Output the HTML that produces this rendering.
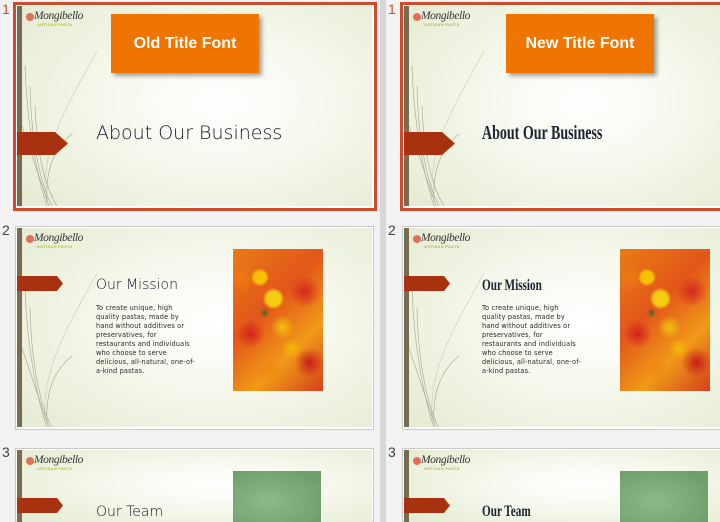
<!DOCTYPE html>
<html style="width:720px;height:522px;overflow:hidden"><head><meta charset="utf-8"><style>
*{margin:0;padding:0;box-sizing:border-box}
body{width:720px;height:522px;overflow:hidden;background:#f2f2f2;position:relative;font-family:"Liberation Sans",sans-serif}
.num{position:absolute;font-size:14px;color:#444}
.num.r{color:#d24a2c}
.sel{position:absolute;border:3px solid #d24a2c;background:#fff}
.gb{position:absolute;border:1px solid #c9c9c9;background:#fff}
.s{position:absolute;width:355px;height:200px;overflow:hidden;background:radial-gradient(ellipse 70% 75% at 57% 48%,#ffffff 0%,#f7f9ef 40%,#e6ecd3 100%)}
.bar{position:absolute;left:0;top:0;width:5px;height:100%;background:#776c52}
.logo{position:absolute;left:9px;top:6px;width:60px;height:20px}
.dot{position:absolute;left:0;top:1px;width:8px;height:8px;border-radius:50%;background:#e0705a}
.mg{position:absolute;left:8px;top:-2px;font-family:"Liberation Serif",serif;font-style:italic;font-size:11.5px;color:#333;letter-spacing:-.4px}
.ap{position:absolute;left:11px;top:10px;font-size:4px;color:#b5c23a;letter-spacing:.3px;font-weight:bold}
.arrow{position:absolute;left:0;width:52px}
.t1{position:absolute;font-family:"DejaVu Sans",sans-serif;font-weight:200;color:#111825;white-space:nowrap}
.t2{position:absolute;font-family:"Liberation Serif",serif;font-weight:bold;color:#1b2230;transform-origin:0 0;transform:scaleX(.7);white-space:nowrap}
.body{position:absolute;font-family:"DejaVu Sans",sans-serif;font-size:6.6px;line-height:9px;color:#2a2a2a;width:100px;letter-spacing:.15px}
.pasta{position:absolute;background:
radial-gradient(circle at 30% 20%,#f6c000 0,#f6c000 6px,transparent 9px),
radial-gradient(circle at 45% 35%,#f4cc10 0,#f4cc10 7px,transparent 11px),
radial-gradient(circle at 55% 55%,#f0c010 0,transparent 12px),
radial-gradient(circle at 65% 70%,#f2b800 0,transparent 10px),
radial-gradient(circle at 20% 60%,#d3221c 0,transparent 14px),
radial-gradient(circle at 80% 30%,#d42820 0,transparent 16px),
radial-gradient(circle at 85% 80%,#c81e1a 0,transparent 15px),
radial-gradient(circle at 10% 20%,#ee7a10 0,transparent 14px),
radial-gradient(circle at 40% 85%,#ef8a10 0,transparent 14px),
radial-gradient(circle at 35% 45%,#4c6a2a 0,transparent 5px),
linear-gradient(135deg,#e97b16,#e2561a 40%,#f09a18 70%,#d3401c)}
.green{position:absolute;background:radial-gradient(ellipse at 40% 60%,#8cba8c,#6fa06c 80%)}
.orange{position:absolute;background:#f07400;color:#fff;font-weight:bold;font-size:16px;text-align:center;line-height:59px;box-shadow:3px 3px 4px rgba(0,0,0,.35)}
.div{position:absolute;left:380px;top:0;width:6px;height:522px;background:#d7d7d7}
</style></head><body>
<div class="div"></div>

<div class="num r" style="left:2px;top:1px">1</div>
<div class="num" style="left:2px;top:222px">2</div>
<div class="num" style="left:2px;top:444px">3</div>
<div class="num r" style="left:388px;top:1px">1</div>
<div class="num" style="left:388px;top:222px">2</div>
<div class="num" style="left:388px;top:444px">3</div>

<div class="sel" style="left:13px;top:2px;width:364px;height:209px"></div>
<div class="gb" style="left:15px;top:226px;width:359px;height:204px"></div>
<div class="gb" style="left:15px;top:448px;width:359px;height:74px"></div>
<div class="sel" style="left:400px;top:2px;width:320px;height:209px;border-right:none"></div>
<div class="gb" style="left:402px;top:226px;width:318px;height:204px;border-right:none"></div>
<div class="gb" style="left:402px;top:448px;width:318px;height:74px;border-right:none"></div>

<div class="s" style="left:17px;top:6px">
 <svg width="355" height="200" style="position:absolute;left:0;top:0"><g fill="none" stroke="#8a8470" stroke-width=".6" opacity=".7"><path d="M8 60 C10 120 20 170 30 200"/><path d="M13 80 C14 130 22 175 35 200"/><path d="M5 120 C15 150 25 180 32 200"/><path d="M28 190 C25 140 50 100 80 45" opacity=".5"/><path d="M30 195 C28 160 40 140 55 128"/><path d="M18 100 C20 150 28 180 40 200"/></g></svg>
 <div class="bar"></div>
 <div class="logo"><div class="dot"></div><div class="mg">Mongibello</div><div class="ap">ARTISAN PASTA</div></div>
 <svg class="arrow" style="top:126px" width="52" height="24"><polygon points="0,0 38,0 51,11.5 38,23 0,23" fill="#a8320f"/></svg>
 <div class="orange" style="left:94px;top:8px;width:148px;height:59px">Old Title Font</div>
 <div class="t1" style="left:79px;top:116px;font-size:19px">About Our Business</div>
</div>

<div class="s" style="left:17px;top:228px;height:199px">
 <svg width="355" height="199" style="position:absolute;left:0;top:0"><g fill="none" stroke="#8a8470" stroke-width=".6" opacity=".7"><path d="M8 60 C10 120 20 170 30 200"/><path d="M13 80 C14 130 22 175 35 200"/><path d="M5 120 C15 150 25 180 32 200"/><path d="M28 190 C25 140 50 100 80 45" opacity=".5"/><path d="M30 195 C28 160 40 140 55 128"/></g></svg>
 <div class="bar"></div>
 <div class="logo"><div class="dot"></div><div class="mg">Mongibello</div><div class="ap">ARTISAN PASTA</div></div>
 <svg class="arrow" style="top:48px" width="52" height="16"><polygon points="0,0 40,0 46,7.5 40,15 0,15" fill="#a8320f"/></svg>
 <div class="t1" style="left:79px;top:49px;font-size:14px">Our Mission</div>
 <div class="body" style="left:79px;top:76px">To create unique, high quality pastas, made by hand without additives or preservatives, for restaurants and individuals who choose to serve delicious, all-natural, one-of-a-kind pastas.</div>
 <div class="pasta" style="left:216px;top:21px;width:90px;height:142px"></div>
</div>

<div class="s" style="left:17px;top:450px;height:72px">
 <div class="bar"></div>
 <div class="logo"><div class="dot"></div><div class="mg">Mongibello</div><div class="ap">ARTISAN PASTA</div></div>
 <svg class="arrow" style="top:48px" width="52" height="16"><polygon points="0,0 40,0 46,7.5 40,15 0,15" fill="#a8320f"/></svg>
 <div class="t1" style="left:79px;top:54px;font-size:14px">Our Team</div>
 <div class="green" style="left:216px;top:21px;width:88px;height:51px"></div>
</div>

<div class="s" style="left:404px;top:6px;width:316px">
 <svg width="316" height="200" style="position:absolute;left:0;top:0"><g fill="none" stroke="#8a8470" stroke-width=".6" opacity=".7"><path d="M8 60 C10 120 20 170 30 200"/><path d="M13 80 C14 130 22 175 35 200"/><path d="M5 120 C15 150 25 180 32 200"/><path d="M28 190 C25 140 50 100 80 45" opacity=".5"/><path d="M30 195 C28 160 40 140 55 128"/><path d="M18 100 C20 150 28 180 40 200"/></g></svg>
 <div class="bar"></div>
 <div class="logo"><div class="dot"></div><div class="mg">Mongibello</div><div class="ap">ARTISAN PASTA</div></div>
 <svg class="arrow" style="top:126px" width="52" height="24"><polygon points="0,0 38,0 51,11.5 38,23 0,23" fill="#a8320f"/></svg>
 <div class="orange" style="left:102px;top:8px;width:148px;height:59px">New Title Font</div>
 <div class="t2" style="left:78px;top:116px;font-size:20px">About Our Business</div>
</div>

<div class="s" style="left:404px;top:228px;height:199px;width:316px">
 <svg width="316" height="199" style="position:absolute;left:0;top:0"><g fill="none" stroke="#8a8470" stroke-width=".6" opacity=".7"><path d="M8 60 C10 120 20 170 30 200"/><path d="M13 80 C14 130 22 175 35 200"/><path d="M5 120 C15 150 25 180 32 200"/><path d="M28 190 C25 140 50 100 80 45" opacity=".5"/><path d="M30 195 C28 160 40 140 55 128"/></g></svg>
 <div class="bar"></div>
 <div class="logo"><div class="dot"></div><div class="mg">Mongibello</div><div class="ap">ARTISAN PASTA</div></div>
 <svg class="arrow" style="top:48px" width="52" height="16"><polygon points="0,0 40,0 46,7.5 40,15 0,15" fill="#a8320f"/></svg>
 <div class="t2" style="left:78px;top:49px;font-size:16px">Our Mission</div>
 <div class="body" style="left:78px;top:76px">To create unique, high quality pastas, made by hand without additives or preservatives, for restaurants and individuals who choose to serve delicious, all-natural, one-of-a-kind pastas.</div>
 <div class="pasta" style="left:216px;top:21px;width:90px;height:142px"></div>
</div>

<div class="s" style="left:404px;top:450px;height:72px;width:316px">
 <div class="bar"></div>
 <div class="logo"><div class="dot"></div><div class="mg">Mongibello</div><div class="ap">ARTISAN PASTA</div></div>
 <svg class="arrow" style="top:48px" width="52" height="16"><polygon points="0,0 40,0 46,7.5 40,15 0,15" fill="#a8320f"/></svg>
 <div class="t2" style="left:78px;top:53px;font-size:16px">Our Team</div>
 <div class="green" style="left:216px;top:21px;width:88px;height:51px"></div>
</div>
</body></html>
